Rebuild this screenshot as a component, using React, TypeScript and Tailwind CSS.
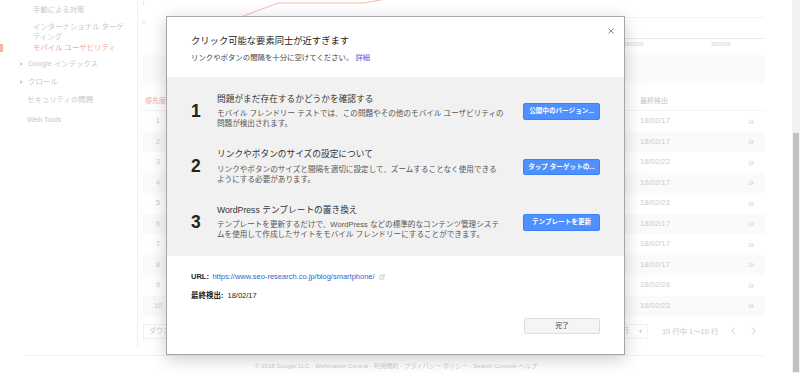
import { ExternalLink } from 'lucide-react';

const dates = ['18/02/17', '18/02/17', '18/02/22', '18/02/17', '18/02/22', '18/02/17', '18/02/17', '18/02/17', '18/02/28', '18/02/23'];

const steps = [
  {
    n: '1',
    title: '問題がまだ存在するかどうかを確認する',
    lines: ['モバイル フレンドリー テストでは、この問題やその他のモバイル ユーザビリティの', '問題が検出されます。'],
    action: '公開中のバージョン...',
  },
  {
    n: '2',
    title: 'リンクやボタンのサイズの設定について',
    lines: ['リンクやボタンのサイズと間隔を適切に設定して、ズームすることなく使用できる', 'ようにする必要があります。'],
    action: 'タップ ターゲットの...',
  },
  {
    n: '3',
    title: 'WordPress テンプレートの置き換え',
    lines: ['テンプレートを更新するだけで、WordPress などの標準的なコンテンツ管理システ', 'ムを使用して作成したサイトをモバイル フレンドリーにすることができます。'],
    action: 'テンプレートを更新',
  },
];

function Caret() {
  return <span className="w-0 h-0 border-y-[2.5px] border-y-transparent border-l-[3px] border-l-[#cfcfcf]" />;
}

function Sidebar() {
  return (
    <aside className="w-[137px] shrink-0 pt-[5px] text-[7.4px] leading-[10px] text-[#c8c8c8]">
      <p className="pl-[33px]">手動による対策</p>
      <p className="pl-[33px] mt-[7px]">
        インターナショナル ターゲ
        <br />
        ティング
      </p>
      <div className="mt-[1px] flex items-center">
        <span className="w-[3px] h-[8px] bg-[#f6b3a8]" />
        <span className="ml-[30px] text-[#f4a497]">モバイル ユーザビリティ</span>
      </div>
      <div className="mt-[6px] flex items-center pl-[20px]">
        <Caret />
        <span className="ml-[5px]">Google インデックス</span>
      </div>
      <div className="mt-[8px] flex items-center pl-[20px]">
        <Caret />
        <span className="ml-[5px]">クロール</span>
      </div>
      <p className="pl-[27px] mt-[8px]">セキュリティの問題</p>
      <p className="pl-[27px] mt-[10px]">Web Tools</p>
    </aside>
  );
}

function Chart() {
  return (
    <div className="relative h-[50px]">
      <svg className="absolute inset-0" width="628" height="50" viewBox="0 0 628 50">
        <line x1="28" y1="17.5" x2="626" y2="17.5" stroke="#f3f3f3" />
        <line x1="28" y1="38.5" x2="626" y2="38.5" stroke="#e8e8e8" />
        <polyline points="60,36 103,17 140,3 226,3 243,0 262,-6" fill="none" stroke="#f7b9ad" strokeWidth="1" />
      </svg>
      <span className="absolute left-[4px] top-0 text-[5px] text-[#d8d8d8]">1</span>
      <span className="absolute left-[4px] top-[19px] text-[5px] text-[#d8d8d8]">0</span>
      <span className="absolute left-[486px] top-[41px] text-[5px] text-[#d0d0d0]">18/03/05</span>
      <span className="absolute left-[573px] top-[41px] text-[5px] text-[#d0d0d0]">18/03/08</span>
    </div>
  );
}

function Main() {
  return (
    <main className="w-[628px] h-[347px] border-l border-[#f0f0f0] flex flex-col">
      <Chart />
      <div className="pl-[5px] flex flex-col">
        <div className="mt-[5px] h-[28px] bg-[#fafafa]" />
        <div className="mt-[10px] h-[18px] flex items-center border-b border-[#f3f3f3] text-[7px]">
          <span className="pl-[2px] text-[#f3afa4]">優先度 ↓</span>
          <span className="ml-auto w-[125px] text-[#c4c4c4]">最終検出</span>
        </div>
        {dates.map((d, i) => (
          <div
            key={i}
            className={`h-[20.5px] flex items-center text-[7.7px] text-[#cdcdcd] ${i % 2 === 1 ? 'bg-[#fafafa]' : ''}`}
          >
            <span className="w-[30px] text-center">{i + 1}</span>
            <span className="ml-auto w-[108px]">{d}</span>
            <span className="w-[17px] text-[11px] leading-none text-[#d6d6d6]">»</span>
          </div>
        ))}
        <div className="mt-[7px] h-[17px] flex items-center text-[7px] text-[#c8c8c8]">
          <span className="h-[15px] px-[5px] flex items-center border border-[#f0f0f0]">ダウンロード</span>
          <span className="ml-auto w-[70px] h-[15px] flex items-center justify-end pr-[4px] border border-[#f3f3f3]">
            <span>10 行</span>
            <span className="ml-[9px] text-[5px]">▼</span>
          </span>
          <span className="w-[117px] flex items-center pl-[14px]">
            <span className="text-[7.4px]">10 行中 1〜10 行</span>
            <svg className="ml-auto" width="5" height="8" viewBox="0 0 5 8">
              <polyline points="4,0.5 1,4 4,7.5" fill="none" stroke="#d0d0d0" />
            </svg>
            <svg className="ml-[15px] mr-[9px]" width="5" height="8" viewBox="0 0 5 8">
              <polyline points="1,0.5 4,4 1,7.5" fill="none" stroke="#d0d0d0" />
            </svg>
          </span>
        </div>
      </div>
    </main>
  );
}

function Modal() {
  return (
    <div className="absolute left-[166px] top-[16px] w-[459px] bg-white border border-[#a6a6a6] shadow-[0_4px_16px_rgba(0,0,0,0.2)]">
      <button className="absolute top-[11px] right-[10px] w-[6px] h-[6px]">
        <svg width="6" height="6" viewBox="0 0 6 6">
          <path d="M0.5 0.5 L5.5 5.5 M5.5 0.5 L0.5 5.5" stroke="#8a8a8a" strokeWidth="1" />
        </svg>
      </button>

      {/* Header */}
      <div className="px-[24px] pt-[18px] pb-[14.6px]">
        <h2 className="text-[9.3px] leading-[13px] text-[#222]">クリック可能な要素同士が近すぎます</h2>
        <p className="mt-[4.5px] text-[7.4px] leading-[10px] text-[#444]">
          リンクやボタンの間隔を十分に空けてください。 <a className="text-[#6a55d4]">詳細</a>
        </p>
      </div>

      {/* Steps */}
      <div className="bg-[#f1f1f1] px-[24px] pt-[16.5px] pb-[16px] flex flex-col gap-[20px]">
        {steps.map((s) => (
          <div key={s.n} className="flex items-center">
            <span className="w-[26px] text-[17.5px] leading-none font-bold text-[#222]">{s.n}</span>
            <div className="w-[295px]">
              <p className="text-[8.7px] leading-[11px] text-[#333]">{s.title}</p>
              <p className="mt-[4.5px] text-[7.6px] leading-[10px] text-[#555] whitespace-nowrap">
                {s.lines[0]}
                <br />
                {s.lines[1]}
              </p>
            </div>
            <button className="ml-auto w-[77px] h-[16.5px] bg-[#4d90fe] border border-[#3d82f0] rounded-[2px] text-white font-bold text-[6.6px] leading-none">
              {s.action}
            </button>
          </div>
        ))}
      </div>

      {/* Details */}
      <div className="px-[24px] pt-[15.7px] pb-[20px] text-[7.5px] leading-[10px] text-[#222]">
        <div className="flex items-center">
          <span className="font-bold">URL:</span>
          <a className="ml-[3.5px] text-[#3366cc]">https://www.seo-research.co.jp/blog/smartphone/</a>
          <ExternalLink className="ml-[4px]" size={6} color="#a0a0a0" strokeWidth={2} />
        </div>
        <div className="mt-[9px] flex items-center">
          <span className="font-bold">最終検出:</span>
          <span className="ml-[4px]">18/02/17</span>
        </div>
        <div className="mt-[17.6px] flex justify-end">
          <button className="w-[76px] h-[16px] bg-[#f5f5f5] border border-[#dcdcdc] rounded-[2px] text-[6.8px] leading-none text-[#444]">
            完了
          </button>
        </div>
      </div>
    </div>
  );
}

export default function App() {
  return (
    <div className="relative w-[800px] h-[373px] overflow-hidden bg-white flex font-['Liberation_Sans','Noto_Sans_CJK_JP',sans-serif]">
      <div className="w-[792px] flex flex-col">
        <div className="flex">
          <Sidebar />
          <Main />
        </div>
        <div className="mt-[8px] ml-[25px] w-[740px] border-t border-[#f3f3f3]" />
        <p className="pt-[6px] text-center text-[6.2px] leading-[8px] text-[#cdcdcd]">
          © 2018 Google LLC - Webmaster Central - 利用規約 - プライバシー ポリシー - Search Console ヘルプ
        </p>
      </div>
      <div className="w-[8px] shrink-0 bg-[#f1f1f1] flex flex-col">
        <div className="mt-[133px] h-[239px] mx-[1px] bg-[#c1c1c1]" />
      </div>
      <Modal />
    </div>
  );
}
